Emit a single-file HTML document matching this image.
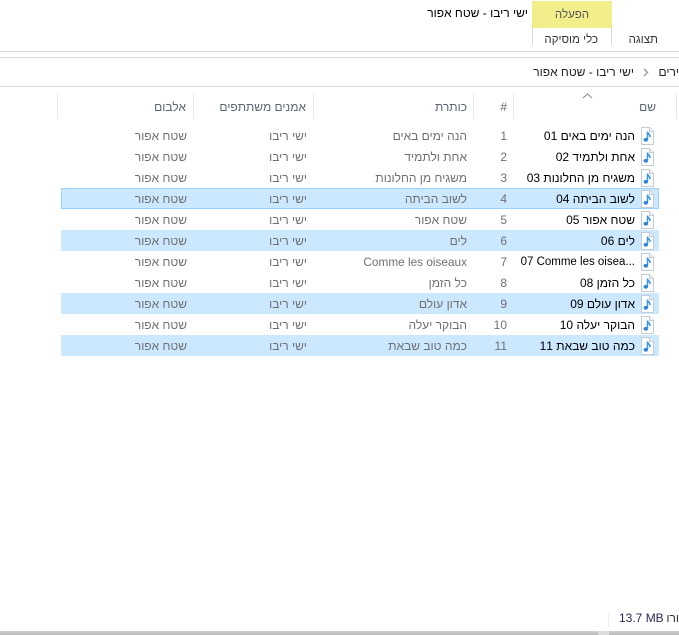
<!DOCTYPE html>
<html lang="he"><head><meta charset="utf-8"><style>
html,body{margin:0;padding:0;background:#fff}
body{position:relative;width:679px;height:635px;overflow:hidden;font:12px "Liberation Sans","DejaVu Sans",sans-serif;color:#000}
.a{position:absolute;white-space:nowrap}
.t{position:absolute;white-space:nowrap;direction:rtl;text-align:right;line-height:16px;height:16px}
.l{position:absolute;background:#dadada}
.h{color:#5a6675;top:99px}
.s{position:absolute;top:94px;width:1px;height:25px;background:#e8e8e8}
.r{position:absolute;left:61px;width:598px;height:21px}
.sel{background:#cce8ff}
.c{color:#707070}
svg.i{position:absolute;left:640px;width:15px;height:18px}
</style></head><body>
<svg width="0" height="0" style="position:absolute"><defs><symbol id="m" viewBox="0 0 15 18"><path d="M1.500.5h8l4 4v13h-12z" fill="#fdfdfd" stroke="#c3cbd4"/><path d="M9.500.5v4h4" fill="#eef2f6" stroke="#c3cbd4"/><path d="M7.500 4.500v7.500M7.500 5c.5 2 3 2.500 2.500 5" fill="none" stroke="#3a96e6" stroke-width="1.500"/><ellipse cx="5.800" cy="12.800" rx="2.300" ry="1.900" fill="#2f86d8"/></symbol></defs></svg>
<div class="a" style="left:532px;top:1px;width:80px;height:27px;background:#f1ee8b"></div>
<div class="t" style="left:532px;top:7px;width:80px;text-align:center;color:#555;font-size:11.500px">הפעלה</div>
<div class="t" style="right:151px;top:5px">ישי ריבו - שטח אפור</div>
<div class="l" style="left:532px;top:28px;width:1px;height:17px;background:#d9d9d9"></div>
<div class="l" style="left:611px;top:28px;width:1px;height:17px;background:#d9d9d9"></div>
<div class="t" style="right:81px;top:32px;color:#333;font-size:11.500px">כלי מוסיקה</div>
<div class="t" style="right:21px;top:32px;color:#333;font-size:11.500px">תצוגה</div>
<div class="l" style="left:0;top:51px;width:679px;height:1px"></div>
<div class="l" style="left:0;top:57px;width:679px;height:1px"></div>
<div class="l" style="left:0;top:86px;width:679px;height:1px"></div>
<div class="t" style="right:0;top:64px;width:22px;overflow:hidden;color:#222">ירים</div>
<svg style="position:absolute;left:643px;top:68px;width:6px;height:9px" viewBox="0 0 6 9"><path d="M1 1l3.500 3.500L1 8" fill="none" stroke="#a0a0a0" stroke-width="1.500"/></svg>
<div class="t" style="right:45px;top:64px;color:#222">ישי ריבו - שטח אפור</div>
<svg style="position:absolute;left:582px;top:93px;width:11px;height:6px" viewBox="0 0 11 6"><path d="M1 5l4.500-4L10 5" fill="none" stroke="#888"/></svg>
<div class="s" style="left:57px"></div><div class="s" style="left:193px"></div><div class="s" style="left:313px"></div><div class="s" style="left:473px"></div><div class="s" style="left:513px"></div><div class="s" style="left:676px"></div>
<div class="t h" style="right:23px">שם</div>
<div class="t h" style="right:172px">#</div>
<div class="t h" style="right:212px">כותרת</div>
<div class="t h" style="right:373px">אמנים משתתפים</div>
<div class="t h" style="right:493px">אלבום</div>

<div class="r" style="top:188px;background:#cce8ff;box-shadow:inset 0 0 0 1px #99d1ff"></div>
<div class="r sel" style="top:230px"></div>
<div class="r sel" style="top:293px"></div>
<div class="r sel" style="top:335px"></div>

<div class="t" style="right:44px;top:128px">הנה ימים באים 01</div><div class="t c" style="right:172px;top:128px">1</div><div class="t c" style="right:212px;top:128px">הנה ימים באים</div><div class="t c" style="right:372px;top:128px">ישי ריבו</div><div class="t c" style="right:492px;top:128px">שטח אפור</div>
<div class="t" style="right:44px;top:149px">אחת ולתמיד 02</div><div class="t c" style="right:172px;top:149px">2</div><div class="t c" style="right:212px;top:149px">אחת ולתמיד</div><div class="t c" style="right:372px;top:149px">ישי ריבו</div><div class="t c" style="right:492px;top:149px">שטח אפור</div>
<div class="t" style="right:44px;top:170px">משגיח מן החלונות 03</div><div class="t c" style="right:172px;top:170px">3</div><div class="t c" style="right:212px;top:170px">משגיח מן החלונות</div><div class="t c" style="right:372px;top:170px">ישי ריבו</div><div class="t c" style="right:492px;top:170px">שטח אפור</div>
<div class="t" style="right:44px;top:191px">לשוב הביתה 04</div><div class="t c" style="right:172px;top:191px">4</div><div class="t c" style="right:212px;top:191px">לשוב הביתה</div><div class="t c" style="right:372px;top:191px">ישי ריבו</div><div class="t c" style="right:492px;top:191px">שטח אפור</div>
<div class="t" style="right:44px;top:212px">שטח אפור 05</div><div class="t c" style="right:172px;top:212px">5</div><div class="t c" style="right:212px;top:212px">שטח אפור</div><div class="t c" style="right:372px;top:212px">ישי ריבו</div><div class="t c" style="right:492px;top:212px">שטח אפור</div>
<div class="t" style="right:44px;top:233px">לים 06</div><div class="t c" style="right:172px;top:233px">6</div><div class="t c" style="right:212px;top:233px">לים</div><div class="t c" style="right:372px;top:233px">ישי ריבו</div><div class="t c" style="right:492px;top:233px">שטח אפור</div>
<div class="a" style="right:44px;top:254px;line-height:16px;font-size:11.500px">07 Comme les oisea...</div><div class="t c" style="right:172px;top:254px">7</div><div class="a c" style="right:212px;top:254px;line-height:16px;font-size:11.800px">Comme les oiseaux</div><div class="t c" style="right:372px;top:254px">ישי ריבו</div><div class="t c" style="right:492px;top:254px">שטח אפור</div>
<div class="t" style="right:44px;top:275px">כל הזמן 08</div><div class="t c" style="right:172px;top:275px">8</div><div class="t c" style="right:212px;top:275px">כל הזמן</div><div class="t c" style="right:372px;top:275px">ישי ריבו</div><div class="t c" style="right:492px;top:275px">שטח אפור</div>
<div class="t" style="right:44px;top:296px">אדון עולם 09</div><div class="t c" style="right:172px;top:296px">9</div><div class="t c" style="right:212px;top:296px">אדון עולם</div><div class="t c" style="right:372px;top:296px">ישי ריבו</div><div class="t c" style="right:492px;top:296px">שטח אפור</div>
<div class="t" style="right:44px;top:317px">הבוקר יעלה 10</div><div class="t c" style="right:172px;top:317px">10</div><div class="t c" style="right:212px;top:317px">הבוקר יעלה</div><div class="t c" style="right:372px;top:317px">ישי ריבו</div><div class="t c" style="right:492px;top:317px">שטח אפור</div>
<div class="t" style="right:44px;top:338px">כמה טוב שבאת 11</div><div class="t c" style="right:172px;top:338px">11</div><div class="t c" style="right:212px;top:338px">כמה טוב שבאת</div><div class="t c" style="right:372px;top:338px">ישי ריבו</div><div class="t c" style="right:492px;top:338px">שטח אפור</div>

<svg class="i" style="top:127px"><use href="#m"/></svg>
<svg class="i" style="top:148px"><use href="#m"/></svg>
<svg class="i" style="top:169px"><use href="#m"/></svg>
<svg class="i" style="top:190px"><use href="#m"/></svg>
<svg class="i" style="top:211px"><use href="#m"/></svg>
<svg class="i" style="top:232px"><use href="#m"/></svg>
<svg class="i" style="top:253px"><use href="#m"/></svg>
<svg class="i" style="top:274px"><use href="#m"/></svg>
<svg class="i" style="top:295px"><use href="#m"/></svg>
<svg class="i" style="top:316px"><use href="#m"/></svg>
<svg class="i" style="top:337px"><use href="#m"/></svg>

<div class="l" style="left:608px;top:613px;width:1px;height:14px;background:#eee"></div>
<div class="a" style="left:619px;top:610px;line-height:16px;color:#2a2a55">13.7 MB</div>
<div class="t" style="right:0;top:610px;color:#333">ורו</div>
<div class="a" style="left:0;top:631px;width:679px;height:4px;background:linear-gradient(#d0d0d0,#b8b8b8)"></div>
<div class="a" style="left:598px;top:631px;width:11px;height:4px;background:#dcdcdc"></div>
</body></html>
